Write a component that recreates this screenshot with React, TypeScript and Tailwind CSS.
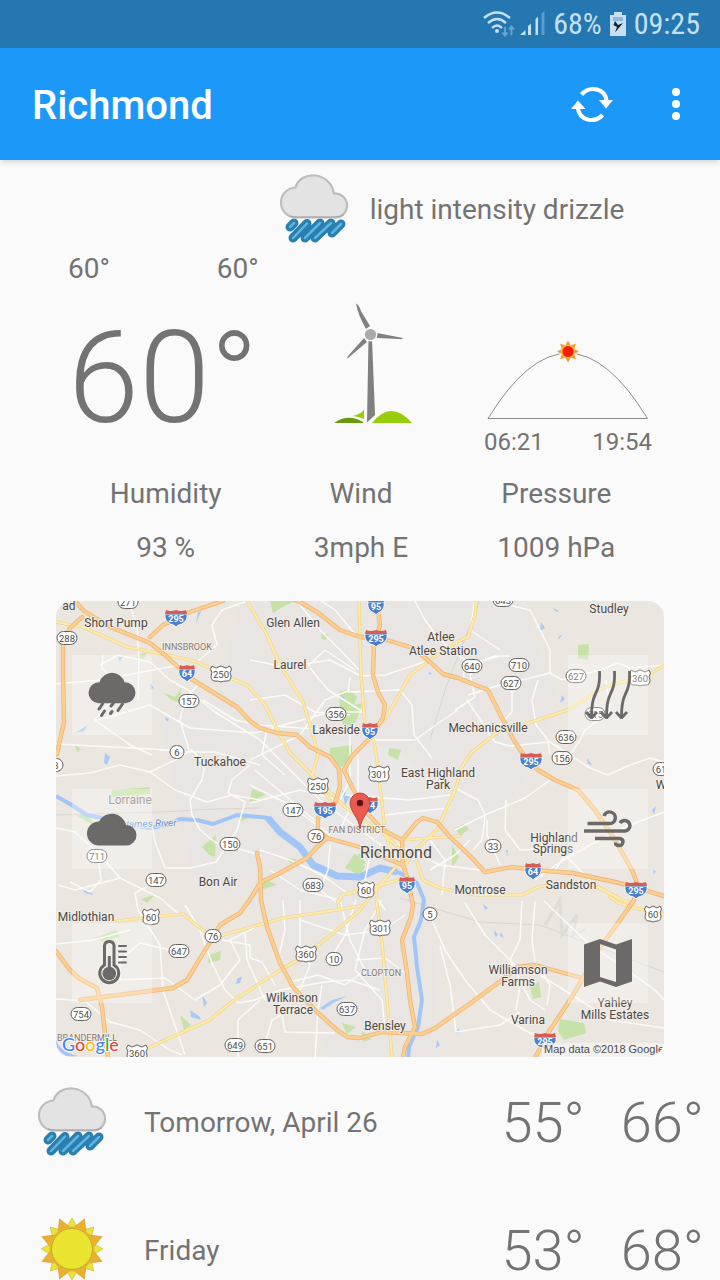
import React from "react";

type Point = [number, number];

const ORANGE_ROADS: string[] = [
  "M75 601L84 611L110 627L150 643L165 655L178 667L193 680L237 707L250 721L260 728L277 733L297 735L310 747L330 757L339 769L340 787L335 803L324 809L318 818L318 830L327 838L360 847L383 857L403 865L407 877L413 905",
  "M377 602L380 625L374 645L373 675L378 692L385 705L383 718L370 738L352 756L344 770L352 787L367 813L383 830L402 840L417 822L423 818L437 822L450 837L470 856L485 872L512 867L535 870L572 873L615 882L635 887L670 898",
  "M402 840L403 865",
  "M82 617L70 628L63 642L63 675L64 722L57 754",
  "M150 637L163 625L190 612L223 601",
  "M290 598L300 602L317 612L340 630L360 637L380 638L413 648L430 662L443 674L458 678L488 690L502 718L515 742L525 757L538 770L555 780L578 790L595 810L615 840L632 870L637 883L634 900L618 923L598 950L582 980L568 1003L548 1033L535 1058",
  "M327 838L317 847L307 858L280 873L260 883L251 898L240 913L220 925L207 947L187 980L173 988L80 1000",
  "M257 853L260 867L261 900L267 927L280 963L293 987L317 1012L337 1030L347 1037L360 1038L382 1032L422 1034L435 1028L468 1005L502 980L518 967L535 965L582 978",
  "M413 905L411 917L402 940L407 973L410 1000L415 1027L405 1047L403 1058",
  "M56 951L70 970L80 979L97 988L102 1007L105 1033L108 1058",
];

const YELLOW_ROADS: string[] = [
  "M56 622L83 627L127 647L177 657L197 662L230 678L247 685L258 697L265 705L280 735L290 753L312 775L345 807L385 835L403 852",
  "M247 601L267 635L280 665L303 702L313 735L318 755L312 775L330 800",
  "M359 601L361 675L365 725L374 742L377 760L380 787L385 830L390 850",
  "M476 601L475 615L468 637L455 643L430 660L410 675L398 697L383 722",
  "M664 665L648 675L622 682L602 688L568 710L522 725L498 732L472 752L463 765L455 790L437 830L415 850L405 865",
  "M403 840L430 838L460 836",
  "M417 862L423 880L440 888L475 895L522 895L538 887L565 883L598 887L622 900L634 904",
  "M117 921L150 917L183 914L200 928L214 937L223 935L283 918L337 910L360 906",
  "M338 900L339 909",
  "M150 1047L183 1032L210 1020L230 1003L277 972L303 957L337 930L360 910L380 885L400 862",
  "M376 890L377 905L382 943L387 1000L390 1033L392 1058",
  "M610 897L618 903L634 908L664 914",
  "M338 903L342 895L378 886L398 880",
];

const WHITE_ROADS: string[] = [
  "M128 601L137 625L139 660L138 700",
  "M247 601L222 610L212 625L217 645L197 662",
  "M203 700L235 720L260 725L300 728L340 730",
  "M100 665L118 655L150 662L170 680L188 690L215 712L260 740L320 800L360 830L402 860",
  "M103 655L102 668L115 680L112 700L95 720L130 745L152 755",
  "M56 744L152 749L190 752L215 752L260 765",
  "M98 720L150 705L190 728L255 733L330 712L365 712",
  "M189 750L180 720L185 700L200 682",
  "M56 776L90 773L120 765L150 772L175 760L192 750L205 765L202 780L190 800L192 815L200 830L216 843L250 852L262 856",
  "M150 772L175 790L207 802L232 795L260 800",
  "M250 765L232 780L228 793L245 802L237 830L216 862L190 868L165 868L155 842L152 825",
  "M56 828L75 832L98 853L120 878L160 898L180 915",
  "M98 853L101 880L90 892L70 882",
  "M120 878L75 890L58 885",
  "M150 885L135 893L138 910L160 945L163 990L185 1055",
  "M56 944L94 940L130 930",
  "M170 950L140 943L120 960L120 980L165 978L195 1000L220 985L240 960L230 940L260 925",
  "M56 999L85 1001L110 1022L140 1030L170 1050L182 1055",
  "M185 905L200 930L212 963L225 990L238 1003L255 1000L280 990L325 982L350 980L380 990",
  "M222 940L250 945L250 958L262 962L275 985",
  "M238 1058L238 1020L260 1000",
  "M262 1053L272 1020L290 1010L318 1010",
  "M282 1015L285 1032L335 1033",
  "M322 985L318 1010L315 1058",
  "M245 932L247 960L265 1000",
  "M250 660L285 667L330 660L361 676L385 675L430 660",
  "M308 666L325 650L355 670",
  "M310 668L328 690L360 710L365 712",
  "M350 677L348 692L400 690L412 705L414 735L432 758",
  "M365 740L415 740L440 722L458 710",
  "M250 760L300 735L325 700L350 690",
  "M250 700L285 695L315 712L350 715",
  "M297 601L320 630L345 655L359 670",
  "M320 600L335 610L360 640",
  "M350 735L350 780L340 800L300 790L250 803",
  "M415 601L425 620L440 640L470 665L495 656L510 656",
  "M504 604L530 610L550 650L550 673L530 678L500 685L468 695",
  "M550 673L562 680L600 670L618 663L630 668L664 665",
  "M500 656L465 665L463 680",
  "M467 700L495 742L510 746L550 742L570 755L580 740L585 730L610 712L606 680",
  "M538 680L532 700L536 725L548 740L550 755",
  "M512 685L512 712L500 725L470 732",
  "M455 710L475 697L470 675L480 665",
  "M570 755L590 768L608 775L630 765L650 758L664 762",
  "M455 830L485 815L525 798L550 780",
  "M455 788L478 800L485 815L482 840L473 850",
  "M506 800L505 830L520 850L570 848",
  "M487 820L487 835L500 865",
  "M535 880L560 862L590 845L630 825L664 812",
  "M555 870L565 855L590 880",
  "M475 600L470 630L500 650",
  "M522 901L520 940L510 960L530 1000L545 1010",
  "M432 920L445 950L465 980L490 1010L535 1036",
  "M465 903L485 935L515 965",
  "M440 946L450 985L456 1032L500 1025L520 1012",
  "M535 901L532 940L535 962L550 985L547 1005",
  "M544 901L590 945L620 965L655 990L664 1000",
  "M520 985L516 1010",
  "M540 975L580 1000L610 1020L664 1028",
  "M382 900L365 930L355 970L382 1000L385 1030",
  "M355 960L385 958L408 975",
  "M340 900L350 940L365 970L345 985L318 975L290 982",
  "M283 900L285 930L278 960L290 985",
  "M300 900L300 945L310 965L300 990",
  "M300 920L345 935L383 930L405 915",
  "M356 900L345 935L330 960",
  "M260 850L290 860L322 875L350 895",
  "M330 845L328 870L320 890L340 905",
  "M270 870L300 890L340 900",
  "M345 795L410 800L450 795",
  "M358 755L358 790L340 830",
  "M385 815L410 812L450 808",
  "M388 840L420 855L440 865L480 870",
  "M430 840L445 860L442 895",
  "M470 840L455 855L430 870",
  "M372 845L365 880L385 910",
  "M56 684L100 680L180 665",
  "M267 728L262 755L285 775",
  "M250 785L290 805L330 835",
  "M255 770L320 825",
];

const RIVER =
  "M56 796L70 804L87 815L107 819L127 825L150 828L167 825L180 819L197 820L213 824L237 815L260 817L268 818L280 832L300 847L313 865L337 876L360 877L380 868L400 873L417 883L424 900L421 920L414 937L417 967L422 1000L418 1027L409 1047L408 1060";

const PARKS: string[] = [
  "M164 693L175 697L181 688L180 703L170 699Z",
  "M138 655l9 -3 -3 7 -8 -1Z",
  "M270 601h25l-14 7-8 5Z",
  "M322 633l7 2-4 5-4-2Z",
  "M339 692l10 -3 8 8-3 8 9-2-8 20-10 5-5-12Z",
  "M330 748l22 -3 0 15-10 7-12-7Z",
  "M389 748l12 2-3 10-10-5Z",
  "M252 789l14 5-16 9Z",
  "M112 790l38-3 0 7-40 3Z",
  "M76 815l12 0 8 12Z",
  "M202 847l14-12-1 22-6-2Z",
  "M240 812l8 6-9 4Z",
  "M253 790l4 11-8 0Z",
  "M262 878l15 7-17 5Z",
  "M345 868l10-15 10 14-6 8Z",
  "M455 828l10-4 4 5-9 7Z",
  "M452 845l7 12-7 10Z",
  "M578 645l11-1-1 16-10-2Z",
  "M180 1015l11 10-7 5Z",
  "M209 955l12-4-1 9-12 3Z",
  "M560 1019l24 4 2 10-22 7-6-8Z",
  "M530 987l9-5 2 15-8 2Z",
  "M94 938l22-8 4 7-18 4Z",
  "M342 1023l14 4-9 7Z",
  "M362 1031l10 8-9 3Z",
  "M155 895l-8 8-6-4Z",
  "M285 858l12 1-4 6Z",
  "M75 745l6 4-4 3Z",
  "M350 862l10-9 6 11Z",
];

const PONDS: string[] = [
  "M118 658l6-3-4 6Z",
  "M150 683l4 5-3 1Z",
  "M75 733l13-8-4 6Z",
  "M165 717l4 2-2 3Z",
  "M198 612l3-1-5 13Z",
  "M105 753l5 4-3 8-3-2Z",
  "M82 888l9 4 2 3-8-2Z",
  "M190 1010l9 6 2 4-10-3Z",
  "M202 995l5 8-3 4Z",
  "M237 979l5-3-2 7-4 1Z",
  "M341 693l4 6-3 2Z",
  "M342 790l8 7-5 8Z",
  "M428 672l4 1-2 2Z",
  "M553 608l6 3-3 1Z",
  "M541 622l4 6-5 3Z",
  "M558 637l5-3-4 5Z",
  "M562 695l3 4-5 4Z",
  "M587 758l5 7-4-1Z",
  "M652 810l4-4-2 9Z",
  "M506 850l2 0-1 7Z",
  "M494 930l4 5-3 2Z",
  "M501 932l3 6-4-2Z",
  "M437 1040l3 5-4 3Z",
  "M458 1028l2 4-4 2Z",
  "M483 904l5 4-3 2Z",
  "M400 1023l5 4-4 7Z",
  "M320 1008l12-8 15-4-12 6-12 8Z",
  "M653 870l3 1-2 3Z",
];

type Label = { text: string; at: Point; size?: number; tone?: "town" | "district" | "faded" };

const LABELS: Label[] = [
  { text: "ad", at: [69, 610] },
  { text: "Short Pump", at: [116, 627] },
  { text: "Glen Allen", at: [293, 627] },
  { text: "Laurel", at: [290, 669] },
  { text: "Lakeside", at: [336, 734] },
  { text: "Atlee", at: [441, 641] },
  { text: "Atlee Station", at: [443, 655] },
  { text: "Studley", at: [609, 613] },
  { text: "Mechanicsville", at: [488, 732] },
  { text: "Tuckahoe", at: [220, 766] },
  { text: "East Highland", at: [438, 777] },
  { text: "Park", at: [438, 789] },
  { text: "Lorraine", at: [130, 804], tone: "faded" },
  { text: "Bon Air", at: [218, 886] },
  { text: "Montrose", at: [480, 894] },
  { text: "Highland", at: [554, 842] },
  { text: "Springs", at: [553, 853] },
  { text: "Sandston", at: [571, 889] },
  { text: "Midlothian", at: [86, 921] },
  { text: "Wilkinson", at: [292, 1002] },
  { text: "Terrace", at: [293, 1014] },
  { text: "Williamson", at: [518, 974] },
  { text: "Farms", at: [518, 986] },
  { text: "Varina", at: [528, 1024] },
  { text: "Bensley", at: [385, 1030] },
  { text: "Yahley", at: [615, 1007] },
  { text: "Mills Estates", at: [615, 1019] },
  { text: "W", at: [661, 789] },
  { text: "Richmond", at: [396, 858], size: 16 },
  { text: "INNSBROOK", at: [187, 650], size: 9, tone: "district" },
  { text: "FAN DISTRICT", at: [357, 833], size: 9, tone: "district" },
  { text: "CLOPTON", at: [381, 976], size: 9, tone: "district" },
  { text: "BRANDERMILL", at: [87, 1041], size: 9, tone: "district" },
];

const LABEL_COLORS = { town: "#4e4844", district: "#8b776c", faded: "#7f7b77" };

type Shield = { n: string; at: Point; kind?: "us" | "interstate" };

const SHIELDS: Shield[] = [
  { n: "271", at: [128, 602] },
  { n: "288", at: [67, 638] },
  { n: "157", at: [189, 701] },
  { n: "6", at: [177, 752] },
  { n: "356", at: [336, 714] },
  { n: "640", at: [472, 666] },
  { n: "710", at: [519, 665] },
  { n: "627", at: [511, 683] },
  { n: "627", at: [576, 676] },
  { n: "615", at: [595, 714] },
  { n: "643", at: [503, 600] },
  { n: "636", at: [566, 737] },
  { n: "156", at: [562, 758] },
  { n: "61", at: [661, 769] },
  { n: "3", at: [56, 765] },
  { n: "147", at: [293, 810] },
  { n: "76", at: [316, 836] },
  { n: "150", at: [230, 844] },
  { n: "711", at: [97, 856] },
  { n: "147", at: [156, 880] },
  { n: "683", at: [313, 885] },
  { n: "33", at: [493, 846] },
  { n: "5", at: [430, 914] },
  { n: "76", at: [213, 936] },
  { n: "647", at: [179, 951] },
  { n: "10", at: [334, 959] },
  { n: "754", at: [81, 1014] },
  { n: "637", at: [347, 1009] },
  { n: "649", at: [235, 1045] },
  { n: "651", at: [265, 1046] },
  { n: "250", at: [221, 674], kind: "us" },
  { n: "360", at: [640, 678], kind: "us" },
  { n: "301", at: [379, 774], kind: "us" },
  { n: "250", at: [318, 786], kind: "us" },
  { n: "60", at: [366, 890], kind: "us" },
  { n: "60", at: [151, 917], kind: "us" },
  { n: "60", at: [653, 914], kind: "us" },
  { n: "301", at: [380, 928], kind: "us" },
  { n: "360", at: [306, 954], kind: "us" },
  { n: "360", at: [137, 1053], kind: "us" },
  { n: "295", at: [176, 618], kind: "interstate" },
  { n: "64", at: [187, 673], kind: "interstate" },
  { n: "95", at: [376, 606], kind: "interstate" },
  { n: "295", at: [376, 638], kind: "interstate" },
  { n: "95", at: [370, 731], kind: "interstate" },
  { n: "295", at: [531, 761], kind: "interstate" },
  { n: "64", at: [370, 805], kind: "interstate" },
  { n: "195", at: [325, 810], kind: "interstate" },
  { n: "95", at: [407, 885], kind: "interstate" },
  { n: "64", at: [533, 871], kind: "interstate" },
  { n: "295", at: [636, 890], kind: "interstate" },
  { n: "295", at: [545, 1041], kind: "interstate" },
];

function RoadShield({ n, at, kind }: Shield) {
  const [x, y] = at;
  if (kind === "interstate") {
    const w = n.length > 2 ? 11 : 8;
    return (
      <g transform={`translate(${x} ${y})`}>
        <path
          d={`M${-w} -4H${w}Q${w + 1} 3 ${w / 2} 6Q1 7 0 9Q-1 7 ${-w / 2} 6Q${-w - 1} 3 ${-w} -4Z`}
          fill="#4a7fc9"
          stroke="#fff"
          strokeWidth="0.8"
        />
        <path d={`M${-w} -4L${-w + 1} -8Q${-w / 2} -6 0 -8Q${w / 2} -6 ${w - 1} -8L${w} -4Z`} fill="#d65c56" />
        <text y="4" textAnchor="middle" fontSize="9" fontWeight="700" fill="#fff">
          {n}
        </text>
      </g>
    );
  }
  const w = n.length > 2 ? 10 : n.length > 1 ? 8 : 7;
  return (
    <g transform={`translate(${x} ${y})`}>
      {kind === "us" ? (
        <path
          d={`M${-w + 1} -8L${-w / 2} -6L0 -8L${w / 2} -6L${w - 1} -8L${w + 0.5} -5Q${w - 2} -1 ${w} 2Q${w} 7 ${w - 4} 7Q2 7 0 8Q-2 7 ${-w + 4} 7Q${-w} 7 ${-w} 2Q${-w + 2} -1 ${-w - 0.5} -5Z`}
          fill="#fff"
          stroke="#66625f"
        />
      ) : (
        <rect x={-w} y="-6.5" width={w * 2} height="13" rx="6.5" fill="#fff" stroke="#66625f" />
      )}
      <text y="3.5" textAnchor="middle" fontSize="9.5" fill="#4e4b48">
        {n}
      </text>
    </g>
  );
}

function RegionMap() {
  return (
    <svg
      viewBox="56 601 608 456"
      className="block w-full"
      role="img"
      aria-label="Map of Richmond"
      fontFamily="Roboto, sans-serif"
    >
      <rect x="56" y="601" width="608" height="456" fill="#ebe6df" />
      <path
        d="M240 601H520L555 690L540 760L470 850L430 890L440 1057H330L280 930L250 905L190 870L160 720L220 690Z"
        fill="#e8e5e2"
      />
      <path d="M330 740L400 750L450 800L430 850L370 860L310 840Z" fill="#eae8e6" />
      {PARKS.map((d, i) => (
        <path key={i} d={d} fill="#c6e2a9" />
      ))}
      {PONDS.map((d, i) => (
        <path key={i} d={d} fill="#a9caf6" />
      ))}
      <path d="M56 815L160 812L215 809L260 808M400 898L480 922L540 925L664 972M480 600L445 690L430 740" fill="none" stroke="#d8d5d1" />
      <path d="M545 925l15-25 2 35 15-20-4 20 12-5" fill="none" stroke="#dfdcd8" strokeWidth="3" />
      <path d={RIVER} fill="none" stroke="#a1c5f7" strokeWidth="4" strokeLinejoin="round" />
      <path
        d="M268 818L280 832L300 847L313 865L337 876L360 877L380 868L397 872"
        fill="none"
        stroke="#a1c5f7"
        strokeWidth="7"
        strokeLinejoin="round"
      />
      <path d="M56 1040Q60 1052 78 1056L56 1057Z" fill="#a1c5f7" />
      <g fill="none" stroke="#fcfbf8" strokeWidth="1.5" strokeLinejoin="round">
        {WHITE_ROADS.map((d, i) => (
          <path key={i} d={d} />
        ))}
      </g>
      <g fill="none" strokeLinejoin="round" strokeLinecap="round">
        {YELLOW_ROADS.map((d, i) => (
          <path key={i} d={d} stroke="#f0d38b" strokeWidth="3.2" />
        ))}
        {YELLOW_ROADS.map((d, i) => (
          <path key={i} d={d} stroke="#fdeaa9" strokeWidth="2" />
        ))}
        {ORANGE_ROADS.map((d, i) => (
          <path key={i} d={d} stroke="#edb574" strokeWidth="4.4" />
        ))}
        {ORANGE_ROADS.map((d, i) => (
          <path key={i} d={d} stroke="#fbcf91" strokeWidth="2.8" />
        ))}
      </g>
      {SHIELDS.map((s, i) => (
        <RoadShield key={i} {...s} />
      ))}
      <g textAnchor="middle" stroke="#f1eeea" strokeWidth="2" paintOrder="stroke" strokeLinejoin="round">
        {LABELS.map(({ text, at, size = 12, tone = "town" }) => (
          <text key={text} x={at[0]} y={at[1]} fontSize={size} fill={LABEL_COLORS[tone]}>
            {text}
          </text>
        ))}
        <text x="150" y="827" fontSize="10" fontStyle="italic" fill="#5b8fd6" transform="rotate(-2 150 827)">
          James River
        </text>
      </g>
      <path
        d="M360 829C359 817 350 812 350 803A10 10 0 0 1 370 803C370 812 361 817 360 829Z"
        fill="#ea5a52"
        stroke="#a8352f"
        strokeWidth="0.8"
      />
      <circle cx="360" cy="803" r="3.2" fill="#5a1512" />
      <text
        x="62"
        y="1051"
        fontSize="18"
        fontWeight="500"
        stroke="#fff"
        strokeWidth="2"
        paintOrder="stroke"
        fontFamily="Lato, sans-serif"
      >
        <tspan fill="#4285f4">G</tspan>
        <tspan fill="#ea4335">o</tspan>
        <tspan fill="#fbbc05">o</tspan>
        <tspan fill="#4285f4">g</tspan>
        <tspan fill="#34a853">l</tspan>
        <tspan fill="#ea4335">e</tspan>
      </text>
      <rect x="542" y="1043" width="122" height="14" fill="#f5f4f1" fillOpacity="0.8" />
      <text x="544" y="1053" fontSize="11" fill="#4c4c4c" fontFamily="Liberation Sans, Arial, sans-serif">
        Map data ©2018 Google
      </text>
    </svg>
  );
}

function RainLayerIcon() {
  return (
    <svg viewBox="0 0 48 48" className="size-12 overflow-visible" aria-hidden="true">
      <path d="M10.500 32.300A10.500 10.500 0 0 1 11.500 11.300A13 13 0 0 1 36.500 11.300A10.500 10.500 0 0 1 37.500 32.300Z" fill="currentColor" />
      <path
        d="M14.500 33L11 38M16.500 40L13.500 44.500M25.500 32L23 35M24 40.500L22.500 42.500M34.500 33L30 39.500"
        stroke="currentColor"
        strokeWidth="3"
        strokeLinecap="round"
      />
    </svg>
  );
}

function CloudLayerIcon() {
  return (
    <svg viewBox="0 0 48 48" className="size-12 overflow-visible" aria-hidden="true">
      <path d="M11 40.500A12 12 0 0 1 11 16.500A14.500 14.500 0 0 1 38 20A10.250 10.250 0 0 1 38.500 40.500Z" fill="currentColor" />
    </svg>
  );
}

function TemperatureLayerIcon() {
  return (
    <svg viewBox="0 0 48 48" className="size-12" aria-hidden="true" fill="none" stroke="currentColor">
      <path d="M16.500 26V6.500A4.800 4.800 0 0 1 26 6.500V26A9.500 9.500 0 1 1 16.500 26Z" strokeWidth="3" />
      <circle cx="21.300" cy="34.500" r="6.800" fill="currentColor" stroke="none" />
      <path d="M21.300 33V17" strokeWidth="3" />
      <path d="M31 7H38M31 12.500H38M31 18H38M31 23.500H38" strokeWidth="2" strokeLinecap="round" />
    </svg>
  );
}

function PressureLayerIcon() {
  return (
    <svg viewBox="0 0 48 48" className="size-12" aria-hidden="true" fill="none" stroke="currentColor">
      {[0, 15, 30].map((x) => (
        <path
          key={x}
          transform={`translate(${x} 0)`}
          d="M15.500 0C16 12 14.500 17 11 24C8 30 7.500 37 7.500 46M2 41L7.500 47L13 41"
          strokeWidth="2.800"
        />
      ))}
    </svg>
  );
}

function WindLayerIcon() {
  return (
    <svg viewBox="0 0 48 48" className="size-12" aria-hidden="true" fill="none" stroke="currentColor" strokeWidth="3.500">
      <path d="M3.500 18.500H25A5.800 5.800 0 1 0 20 11" />
      <path d="M0 26H41A5.300 5.300 0 1 0 36 18" />
      <path d="M11 33.500H36C41 35 39 40.500 35 40.500C32.500 40.500 31.500 39 31.500 37.500" />
    </svg>
  );
}

function BaseMapLayerIcon() {
  return (
    <svg viewBox="0 0 48 48" className="size-12" aria-hidden="true" fill="currentColor" fillRule="evenodd">
      <path d="M16 0L32 5.500L48 0V42.500L32 48L16 42.500L0 48V5.500ZM16 5V38L32 43V10.500Z" />
    </svg>
  );
}

function LayerButton({ label, children }: { label: string; children: React.ReactNode }) {
  return (
    <button
      type="button"
      aria-label={label}
      className="flex size-20 items-center justify-center bg-white/30 text-[#6c6a68]"
    >
      {children}
    </button>
  );
}

function DrizzleIcon() {
  const drops = "M12 55L16 51M15 66L29 51.500M27 66L42 51M37 66L53 51M54 61L63 52";
  return (
    <svg viewBox="0 0 72 72" className="size-[72px] shrink-0" aria-hidden="true" fill="none">
      <g strokeLinecap="round">
        <path d={drops} stroke="#2a7fae" strokeWidth="9" />
        <path d={drops} stroke="#5cb6e4" strokeWidth="2.500" />
      </g>
      <path
        d="M18.500 45.500A14.800 14.800 0 0 1 17.500 15.500C22 -1.500 52 -1.500 56 21.500A12 12 0 0 1 58 45.500Z"
        fill="#e3e3e3"
        stroke="#bcbdbd"
        strokeWidth="2.200"
      />
      <path d="M12 44Q15 45 20 45H58Q63 45 66 42.500" stroke="#a3a4a4" strokeWidth="1.200" />
    </svg>
  );
}

function SunnyIcon() {
  const rays = [0, 45, 90, 135, 180, 225, 270, 315];
  return (
    <svg viewBox="0 0 72 72" className="size-[72px] shrink-0" aria-hidden="true">
      {rays.map((a) => (
        <path key={a} transform={`rotate(${a} 36 36)`} d="M29 17L36 5L43 17Z" fill="#e9e43c" stroke="#c9ba32" strokeWidth="0.600" />
      ))}
      {rays.map((a) => (
        <path key={a} transform={`rotate(${a + 22.5} 36 36)`} d="M28 18L36 3.500L44 18Z" fill="#eab02e" stroke="#cf9a2b" strokeWidth="0.600" />
      ))}
      <circle cx="36" cy="36" r="22.500" fill="#e8b62c" />
      <circle cx="36" cy="36" r="20.500" fill="#e9e42f" stroke="#c9a52b" strokeWidth="1" />
    </svg>
  );
}

function TurbineIcon() {
  return (
    <svg viewBox="0 0 80 124" className="h-[124px] w-20" aria-hidden="true">
      <path d="M19 113Q29 110 30 106V116Q25 114 19 113Z" fill="#99cc0a" />
      <path d="M0 120Q14 110 29 119V120Z" fill="#689a10" />
      <path d="M38 120Q57 96 78 120Z" fill="#99cc0a" />
      <path d="M34.500 36H38L41 112L33 119.500Z" fill="#808080" />
      <g fill="#808080">
        <path d="M22 0.500Q25 2 27 8L36 23L32 26Q24 12 22 0.500Z" />
        <path d="M43 30L69 35Q69 36.500 65 36L43 35Z" />
        <path d="M30 35L33 39L14 55Q12 56 14 53Z" />
      </g>
      <circle cx="36.500" cy="31.500" r="7" fill="#fafafa" />
      <circle cx="36.500" cy="31.500" r="5.600" fill="#aaa" />
    </svg>
  );
}

function SunPath() {
  const rays = [0, 45, 90, 135, 180, 225, 270, 315];
  return (
    <svg viewBox="0 0 168 80" className="h-20 w-[168px]" aria-hidden="true">
      <path d="M4 78.500Q84 -52 163.500 78.500Z" fill="none" stroke="#8c8c8c" />
      <circle cx="84" cy="12" r="9" fill="#fafafa" />
      {rays.map((a) => (
        <path key={a} transform={`rotate(${a} 84 11.500)`} d="M81.500 5L84 0.500L86.500 5Z" fill="#f59a2c" />
      ))}
      <circle cx="84" cy="11.500" r="7" fill="#fbb540" />
      <circle cx="84" cy="11.500" r="5.600" fill="#fb1c04" />
    </svg>
  );
}

function StatusBar() {
  return (
    <div className="flex h-12 shrink-0 items-center justify-end bg-[#2577b1] pr-5 font-['Roboto_Condensed','Liberation_Sans_Narrow',Roboto,sans-serif] text-[30px] leading-12 text-[#c6e0f3]">
      <svg viewBox="0 0 32 26" className="mr-1 h-[26px] w-8" fill="none" aria-hidden="true">
        <g stroke="#c6e0f3" strokeWidth="2.400">
          <path d="M1 7Q14 -4 27 7" />
          <path d="M5 12Q14 4 23 12" />
          <path d="M9 17Q14 12 19 17" />
        </g>
        <circle cx="14" cy="20" r="2" fill="#c6e0f3" />
        <path d="M22 16V24M19.500 21.500L22 24.500L24.500 21.500M28.500 24V16M26 18.500L28.500 15.500L31 18.500" stroke="#6ba5d0" strokeWidth="1.800" />
      </svg>
      <svg viewBox="0 0 26 26" className="mr-2 h-[26px] w-[26px]" aria-hidden="true">
        <path d="M1 24L6.500 19V24ZM9 24V15L12 12.500V24ZM16.500 24V8L19 5.500V24Z" fill="#c6e0f3" />
        <path d="M22.500 24V2.500L25.500 0V24Z" fill="#5c9ccb" />
      </svg>
      <span>68%</span>
      <svg viewBox="0 0 16 24" className="mx-2 h-6 w-4" aria-hidden="true">
        <path d="M4 0H12V3H16V24H0V3H4Z" fill="#c6e0f3" />
        <path d="M3 5H13V9H3Z" fill="#8dbadd" />
        <path d="M5 9L8 13L13 11L5 20.500L7 15L3.500 13Z" fill="#16222c" />
      </svg>
      <span>09:25</span>
    </div>
  );
}

function AppBar() {
  return (
    <header className="z-10 flex h-28 shrink-0 items-center bg-[#1c98f8] pr-4 pl-8 text-white shadow-md">
      <h1 className="flex-1 pt-1 text-[40px] leading-12 font-medium">Richmond</h1>
      <button type="button" aria-label="Refresh" className="mr-6 flex size-16 items-center justify-center">
        <svg viewBox="0 0 42 36" className="h-9 w-[42px]" fill="none" aria-hidden="true">
          <path d="M10.500 8.500C19 -1 34.500 2.500 35.500 15" stroke="#fff" strokeWidth="4.200" />
          <path d="M28 14H42L35 22.500Z" fill="#fff" />
          <path d="M31.500 29C23 38 8.500 34 7 22.500" stroke="#fff" strokeWidth="4.200" />
          <path d="M0 23H14.500L7 14.500Z" fill="#fff" />
        </svg>
      </button>
      <button type="button" aria-label="More options" className="flex h-16 w-14 items-center justify-center">
        <svg viewBox="0 0 8 32" className="h-8 w-2" fill="#fff" aria-hidden="true">
          <circle cx="4" cy="4" r="4" />
          <circle cx="4" cy="16" r="4" />
          <circle cx="4" cy="28" r="4" />
        </svg>
      </button>
    </header>
  );
}

const DETAILS = [
  { name: "Humidity", value: "93 %" },
  { name: "Wind", value: "3mph E" },
  { name: "Pressure", value: "1009 hPa" },
];

const FORECAST = [
  { day: "Tomorrow, April 26", low: "55°", high: "66°", Icon: DrizzleIcon },
  { day: "Friday", low: "53°", high: "68°", Icon: SunnyIcon },
];

export default function App() {
  return (
    <div className="flex h-screen flex-col overflow-hidden bg-[#fafafa] font-[Roboto,sans-serif] text-[28px] leading-8 text-[#737373]">
      <StatusBar />
      <AppBar />
      <main className="flex-1 overflow-y-auto [scrollbar-width:none]">
        <div className="flex items-center justify-center gap-5 pt-3 pl-[182px]">
          <DrizzleIcon />
          <span className="pt-1">light intensity drizzle</span>
        </div>

        <section className="grid grid-cols-3 px-[68px] pt-2">
          <div className="pt-px">
            <div className="flex justify-between pr-1">
              <span>60°</span>
              <span>60°</span>
            </div>
            <div className="mt-7 text-[128px] leading-[130px] font-light">60°</div>
          </div>
          <div className="flex justify-center pt-[51px] pl-7">
            <TurbineIcon />
          </div>
          <div className="flex flex-col items-end pt-[88px]">
            <SunPath />
            <div className="mt-2 flex w-[168px] justify-between text-2xl leading-7">
              <span>06:21</span>
              <span>19:54</span>
            </div>
          </div>
        </section>

        <dl className="mt-[22px] grid grid-cols-3 pr-[66px] pl-[68px] text-center">
          {DETAILS.map(({ name, value }) => (
            <div key={name}>
              <dt>{name}</dt>
              <dd className="mt-[22px]">{value}</dd>
            </div>
          ))}
        </dl>

        <section className="relative mx-14 mt-[37px] overflow-hidden rounded-2xl">
          <RegionMap />
          <div className="absolute inset-0 flex items-center justify-between px-4">
            <div className="flex flex-col gap-[54px]">
              <LayerButton label="Rain layer">
                <RainLayerIcon />
              </LayerButton>
              <LayerButton label="Cloud layer">
                <CloudLayerIcon />
              </LayerButton>
              <LayerButton label="Temperature layer">
                <TemperatureLayerIcon />
              </LayerButton>
            </div>
            <div className="flex flex-col gap-[54px]">
              <LayerButton label="Pressure layer">
                <PressureLayerIcon />
              </LayerButton>
              <LayerButton label="Wind layer">
                <WindLayerIcon />
              </LayerButton>
              <LayerButton label="Base map">
                <BaseMapLayerIcon />
              </LayerButton>
            </div>
          </div>
        </section>

        <ul>
          {FORECAST.map(({ day, low, high, Icon }) => (
            <li key={day} className="flex h-32 items-center pr-4 pl-9">
              <Icon />
              <span className="ml-9 flex-1 pt-1">{day}</span>
              <span className="flex gap-9 pt-1 text-[56px] leading-16 font-light">
                <span>{low}</span>
                <span>{high}</span>
              </span>
            </li>
          ))}
        </ul>
      </main>
    </div>
  );
}
